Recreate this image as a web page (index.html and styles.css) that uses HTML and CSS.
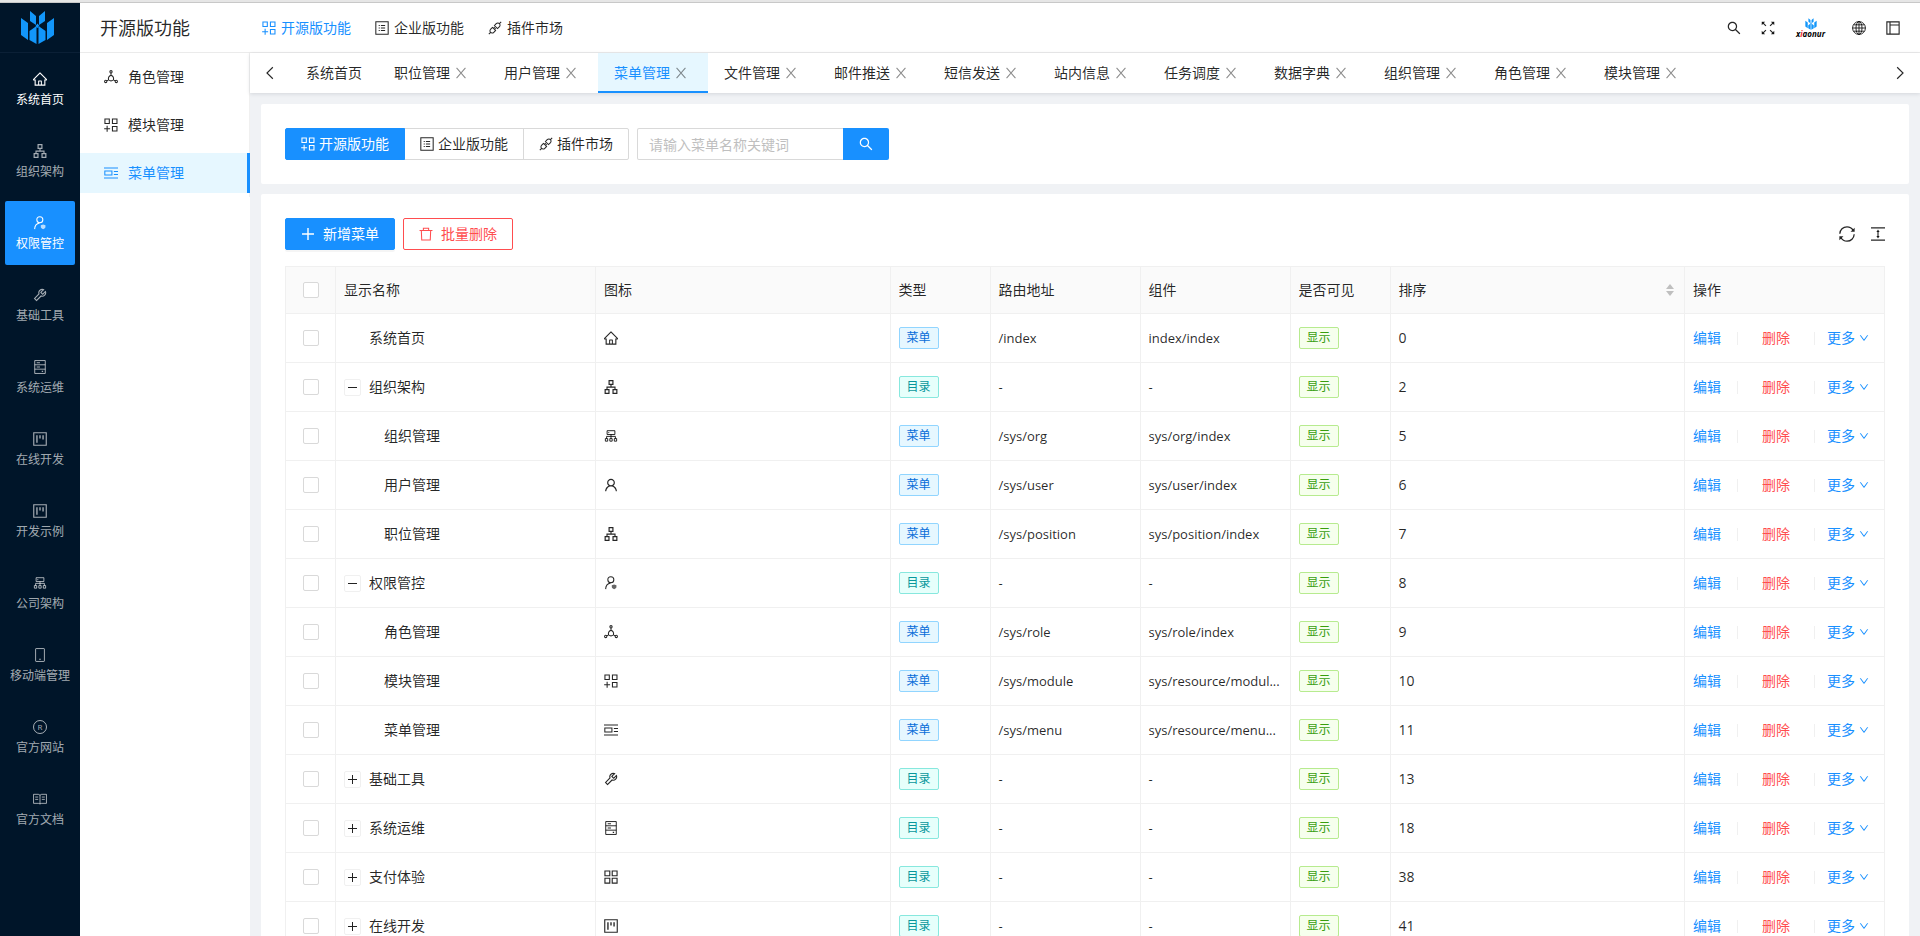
FILE: index.html
```html
<!DOCTYPE html>
<html lang="zh-CN">
<head>
    <meta charset="UTF-8">
    <meta name="viewport" content="width=device-width, initial-scale=1.0">
    <title>菜单管理</title>
    <link rel="stylesheet" href="styles.css">
</head>
<body>
    <!-- Icon sprite -->
    <svg class="sprite" aria-hidden="true">
        <symbol id="i-logo" viewBox="0 0 35 33">
            <path d="M1 7l7 5v17l-7-5zM34 7l-7 5v17l7-5zM10 0l6 5v9l-6-4zM25 0l-6 5v9l6-4zM17.500 12.500l2 2.500-2 2-2-2zM9.500 20l7-5v18l-7-4zM25.500 20l-7-5v18l7-4z"/>
        </symbol>
        <symbol id="i-home" viewBox="64 64 896 896">
            <path d="M946.5 505L534.2 92.900a31.500 31.500 0 00-44.400 0L77.500 505a63.900 63.900 0 00-18.800 46c.4 35.200 29.700 63.300 64.900 63.300h42.500V940h691.800V614.300h43.400c17.100 0 33.200-6.700 45.300-18.800a63.600 63.600 0 0018.700-45.300c0-17-6.700-33.100-18.800-45.200zM568 868H456V664h112v204zm217.900-325.700V868H632V640c0-22.100-17.900-40-40-40H432c-22.100 0-40 17.900-40 40v228H238.100V542.300h-96l370-369.700L882 542.300h-96.100z"/>
        </symbol>
        <symbol id="i-apartment" viewBox="64 64 896 896">
            <path d="M908 640H804V488c0-4.400-3.600-8-8-8H548v-96h108c8.800 0 16-7.200 16-16V80c0-8.800-7.200-16-16-16H368c-8.800 0-16 7.200-16 16v288c0 8.800 7.200 16 16 16h108v96H228c-4.400 0-8 3.600-8 8v152H116c-8.800 0-16 7.200-16 16v288c0 8.800 7.200 16 16 16h288c8.800 0 16-7.200 16-16V656c0-8.800-7.200-16-16-16H292v-88h440v88H620c-8.800 0-16 7.200-16 16v288c0 8.800 7.200 16 16 16h288c8.800 0 16-7.200 16-16V656c0-8.800-7.200-16-16-16zm-564 76v168H176V716h168zm84-408V140h168v168H428zm420 576H680V716h168v168z"/>
        </symbol>
        <symbol id="i-user" viewBox="64 64 896 896">
            <path d="M858.500 763.600a374 374 0 00-80.600-119.500 375.630 375.630 0 00-119.500-80.600c-.4-.2-.8-.3-1.200-.5C719.500 518 760 444.700 760 362c0-137-111-248-248-248S264 225 264 362c0 82.700 40.500 156 102.800 201.100-.4.2-.8.3-1.200.5-44.800 18.900-85 46-119.500 80.600a375.630 375.630 0 00-80.600 119.500A371.700 371.700 0 00136 901.800a8 8 0 008 8.200h60c4.400 0 7.900-3.500 8-7.800 2-77.200 33-149.500 87.800-204.300 56.700-56.700 132-87.900 212.200-87.900s155.500 31.200 212.200 87.900C779 752.700 810 825 812 902.200c.1 4.400 3.600 7.800 8 7.800h60a8 8 0 008-8.200c-1-47.800-10.900-94.300-29.500-138.200zM512 534c-45.900 0-89.100-17.900-121.600-50.400S340 407.900 340 362c0-45.900 17.900-89.100 50.400-121.600S466.100 190 512 190s89.100 17.900 121.600 50.400S684 316.100 684 362c0 45.900-17.900 89.100-50.400 121.600S557.900 534 512 534z"/>
        </symbol>
        <symbol id="i-user-safe" viewBox="0 0 1024 1024">
            <g fill="none" stroke="currentColor" stroke-width="76"><circle cx="500" cy="280" r="220"/><path d="M120 960c10-230 140-400 360-440"/></g>
            <path opacity=".7" d="M740 620l170 56v130c0 70-80 114-170 160-90-46-170-90-170-160V676z"/>
        </symbol>
        <symbol id="i-tool" viewBox="64 64 896 896">
            <path d="M876.600 239.500c-.5-.9-1.200-1.800-2-2.500-5-5-13.100-5-18.100 0L684.200 409.300l-67.900-67.900L788.700 169c.8-.8 1.400-1.600 2-2.500 3.600-6.100 1.600-13.900-4.500-17.500-98.200-58-226.800-44.700-311.300 39.700-67 67-89.200 162-66.500 247.400l-293 293c-3 3-2.800 7.900.3 11l169.700 169.700c3.100 3.100 8.100 3.300 11 .3l292.900-292.900c85.500 22.800 180.500.7 247.600-66.400 84.400-84.500 97.700-213.100 39.700-311.300zM786 499.800c-58.100 58.100-145.300 69.300-214.600 33.600l-282.900 282.800-79.200-79.200 282.900-282.800c-35.700-69.300-24.500-156.500 33.600-214.600a184.200 184.200 0 01144-53.500L537 318.900a32.050 32.050 0 000 45.300l124.500 124.500a32.050 32.050 0 0045.300 0l132.800-132.800c3.700 51.800-14.400 104.800-53.600 143.900z"/>
        </symbol>
        <symbol id="i-server" viewBox="0 0 1024 1024">
            <path fill="none" stroke="currentColor" stroke-width="72" d="M126 40h772v944H126zM126 350h772M126 670h772"/>
            <path d="M270 170h240v60H270zM270 480h240v60H270zM640 790h100v80H640z"/>
        </symbol>
        <symbol id="i-project" viewBox="64 64 896 896">
            <path fill="none" stroke="currentColor" stroke-width="72" d="M112 112h800v800H112z"/>
            <path d="M272 272h88v480h-88zM468 272h88v200h-88zM664 272h88v270h-88z"/>
        </symbol>
        <symbol id="i-cluster" viewBox="0 0 1024 1024">
            <path fill="none" stroke="currentColor" stroke-width="72" d="M228 124h568v280H228zM512 404v250M190 700V540h644v160M100 700h170v190H100zM427 700h170v190H427zM754 700h170v190H754z"/>
            <circle cx="350" cy="264" r="44"/>
        </symbol>
        <symbol id="i-mobile" viewBox="0 0 1024 1024">
            <rect x="190" y="40" width="644" height="944" rx="40" fill="none" stroke="currentColor" stroke-width="72"/>
            <path d="M450 790h124v70H450z"/>
        </symbol>
        <symbol id="i-read" viewBox="0 0 1024 1024">
            <path fill="none" stroke="currentColor" stroke-width="70" d="M40 170h330c80 0 142 40 142 90 0-50 62-90 142-90h330v660H654c-80 0-142 30-142 60 0-30-62-60-142-60H40zM512 260v620M160 370h220M160 540h220M644 370h220M644 540h220"/>
        </symbol>
        <symbol id="i-role" viewBox="0 0 1024 1024">
            <g fill="none" stroke="currentColor" stroke-width="76"><circle cx="512" cy="130" r="84"/><circle cx="124" cy="840" r="84"/><circle cx="900" cy="840" r="84"/><path d="M512 214v170M300 745l-96 50M724 745l96 50M512 384c-150 60-212 190-180 340 110 90 250 90 360 0 32-150-30-280-180-340z"/></g>
        </symbol>
        <symbol id="i-module" viewBox="64 64 896 896">
            <path fill="none" stroke="currentColor" stroke-width="68" d="M124 124h280v290H124zM604 124h290v290H604zM604 610h290v290H604zM264 560v380M74 750h380"/>
        </symbol>
        <symbol id="i-menu" viewBox="0 0 1024 1024">
            <path fill="none" stroke="currentColor" stroke-width="76" d="M0 150h1024M0 874h1024M60 360h520v300H60zM720 400h304M720 620h304"/>
        </symbol>
        <symbol id="i-appstore" viewBox="64 64 896 896">
            <path fill="none" stroke="currentColor" stroke-width="72" d="M124 124h310v310H124zM590 124h310v310H590zM124 590h310v310H124zM590 590h310v310H590z"/>
        </symbol>
        <symbol id="i-profile" viewBox="0 0 1024 1024">
            <path fill="none" stroke="currentColor" stroke-width="76" d="M60 60h904v904H60zM430 330h310M430 512h310M430 694h310M270 330h80M270 512h80M270 694h80"/>
        </symbol>
        <symbol id="i-api" viewBox="0 0 1024 1024">
            <path fill="none" stroke="currentColor" stroke-width="76" d="M60 964l130-130M964 60L834 190M470 330l130-130c70-70 170-80 234-10 70 64 60 164-10 234L694 554zM330 470L200 600c-70 70-80 170-10 234 64 70 164 60 234-10l130-130zM400 540l90-90M480 620l90-90"/>
        </symbol>
        <symbol id="i-search" viewBox="64 64 896 896">
            <path d="M909.600 854.500L649.900 594.800C690.200 542.700 712 479 712 412c0-80.200-31.300-155.400-87.900-212.100-56.600-56.700-132-87.900-212.100-87.900s-155.500 31.300-212.100 87.900C143.200 256.500 112 331.800 112 412c0 80.100 31.300 155.500 87.900 212.100C256.500 680.800 331.800 712 412 712c67 0 130.600-21.800 182.700-62l259.700 259.600a8.200 8.200 0 0011.600 0l43.600-43.500a8.200 8.200 0 000-11.600zM570.400 570.400C528 612.700 471.800 636 412 636s-116-23.300-158.400-65.600C211.300 528 188 471.800 188 412s23.300-116.100 65.600-158.400C296 211.300 352.200 188 412 188s116.100 23.200 158.400 65.600S636 352.200 636 412s-23.300 116.100-65.600 158.400z"/>
        </symbol>
        <symbol id="i-fullscreen" viewBox="64 64 896 896">
            <path fill="none" stroke="currentColor" stroke-width="76" d="M150 150l230 230M874 150L644 380M150 874l230-230M874 874L644 644"/>
            <path d="M110 110h220L110 330zM914 110H694l220 220zM110 914h220L110 694zM914 914H694l220-220z"/>
        </symbol>
        <symbol id="i-global" viewBox="0 0 1024 1024">
            <g fill="none" stroke="currentColor" stroke-width="70"><circle cx="512" cy="512" r="470"/><ellipse cx="512" cy="512" rx="220" ry="470"/><path d="M512 42v940M42 512h940M120 280h784M120 744h784"/></g>
        </symbol>
        <symbol id="i-layout" viewBox="64 64 896 896">
            <path fill="none" stroke="currentColor" stroke-width="72" d="M120 120h784v784H120zM320 120v784M320 320h584"/>
        </symbol>
        <symbol id="i-left" viewBox="0 0 1024 1024">
            <path fill="none" stroke="currentColor" stroke-width="84" d="M720 90L290 512l430 422"/>
        </symbol>
        <symbol id="i-right" viewBox="0 0 1024 1024">
            <path fill="none" stroke="currentColor" stroke-width="84" d="M304 90l430 422-430 422"/>
        </symbol>
        <symbol id="i-down" viewBox="64 64 896 896">
            <path d="M884 256h-75c-5.100 0-9.900 2.500-12.900 6.600L512 654.200 227.900 262.600c-3-4.100-7.800-6.600-12.900-6.600h-75c-6.500 0-10.300 7.400-6.500 12.700l352.600 486.100c12.800 17.600 39 17.600 51.700 0l352.600-486.100c3.900-5.300.1-12.700-6.400-12.700z"/>
        </symbol>
        <symbol id="i-close" viewBox="64 64 896 896">
            <path fill="none" stroke="currentColor" stroke-width="80" d="M180 130l664 764M844 130L180 894"/>
        </symbol>
        <symbol id="i-plus" viewBox="64 64 896 896">
            <path fill="none" stroke="currentColor" stroke-width="90" d="M512 130v764M130 512h764"/>
        </symbol>
        <symbol id="i-delete" viewBox="0 0 1024 1024">
            <path fill="none" stroke="currentColor" stroke-width="76" d="M40 250h944M320 250V90h384v160M170 250l30 700h624l30-700"/>
        </symbol>
        <symbol id="i-sync" viewBox="64 64 896 896">
            <path fill="none" stroke="currentColor" stroke-width="72" d="M110 500c10-220 180-390 402-390 150 0 270 70 340 190M914 524c-10 220-180 390-402 390-150 0-270-70-340-190"/>
            <path d="M940 160v230H710zM84 864V634h230z"/>
        </symbol>
        <symbol id="i-height" viewBox="0 0 1024 1024">
            <path fill="none" stroke="currentColor" stroke-width="84" d="M0 60h1024M0 964h1024M512 300v424"/>
            <path d="M512 190l120 180H392zM512 834l120-180H392z"/>
        </symbol>
    </svg>

    <div class="window-edge"></div>
    <div class="layout">
        <aside class="sider">
            <a class="sider-logo" href="#" aria-label="xiaonuo"><svg><use href="#i-logo"/></svg></a>
            <nav class="sider-nav">
                <a href="#" class="sider-item bright"><svg class="icon"><use href="#i-home"/></svg>系统首页</a>
                <a href="#" class="sider-item"><svg class="icon"><use href="#i-apartment"/></svg>组织架构</a>
                <a href="#" class="sider-item active"><svg class="icon"><use href="#i-user-safe"/></svg>权限管控</a>
                <a href="#" class="sider-item"><svg class="icon"><use href="#i-tool"/></svg>基础工具</a>
                <a href="#" class="sider-item"><svg class="icon"><use href="#i-server"/></svg>系统运维</a>
                <a href="#" class="sider-item"><svg class="icon"><use href="#i-project"/></svg>在线开发</a>
                <a href="#" class="sider-item"><svg class="icon"><use href="#i-project"/></svg>开发示例</a>
                <a href="#" class="sider-item"><svg class="icon"><use href="#i-cluster"/></svg>公司架构</a>
                <a href="#" class="sider-item"><svg class="icon"><use href="#i-mobile"/></svg>移动端管理</a>
                <a href="#" class="sider-item"><span class="icon registered">R</span>官方网站</a>
                <a href="#" class="sider-item"><svg class="icon"><use href="#i-read"/></svg>官方文档</a>
            </nav>
        </aside>

        <div class="page">
            <header class="header">
                <h1 class="header-title">开源版功能</h1>
                <nav class="header-nav">
                    <a href="#" class="active"><svg class="icon"><use href="#i-module"/></svg>开源版功能</a>
                    <a href="#"><svg class="icon"><use href="#i-profile"/></svg>企业版功能</a>
                    <a href="#"><svg class="icon"><use href="#i-api"/></svg>插件市场</a>
                </nav>
                <div class="header-tools">
                    <button type="button" aria-label="搜索"><svg class="icon"><use href="#i-search"/></svg></button>
                    <button type="button" aria-label="全屏"><svg class="icon"><use href="#i-fullscreen"/></svg></button>
                    <a class="brand" href="#"><svg><use href="#i-logo"/></svg><span>x<i>i</i>aonur</span></a>
                    <button type="button" aria-label="语言"><svg class="icon"><use href="#i-global"/></svg></button>
                    <button type="button" aria-label="布局"><svg class="icon"><use href="#i-layout"/></svg></button>
                </div>
            </header>

            <div class="body">
                <aside class="submenu">
                    <nav>
                        <a href="#"><svg class="icon"><use href="#i-role"/></svg>角色管理</a>
                        <a href="#"><svg class="icon"><use href="#i-module"/></svg>模块管理</a>
                        <a href="#" class="active"><svg class="icon"><use href="#i-menu"/></svg>菜单管理</a>
                    </nav>
                </aside>

                <div class="content">
                    <div class="tabs">
                        <button type="button" class="tabs-arrow" aria-label="向左"><svg class="icon"><use href="#i-left"/></svg></button>
                        <ul class="tabs-list">
                            <li><a href="#">系统首页</a></li>
                            <li><a href="#">职位管理</a><button type="button" aria-label="关闭"><svg><use href="#i-close"/></svg></button></li>
                            <li><a href="#">用户管理</a><button type="button" aria-label="关闭"><svg><use href="#i-close"/></svg></button></li>
                            <li class="active"><a href="#">菜单管理</a><button type="button" aria-label="关闭"><svg><use href="#i-close"/></svg></button></li>
                            <li><a href="#">文件管理</a><button type="button" aria-label="关闭"><svg><use href="#i-close"/></svg></button></li>
                            <li><a href="#">邮件推送</a><button type="button" aria-label="关闭"><svg><use href="#i-close"/></svg></button></li>
                            <li><a href="#">短信发送</a><button type="button" aria-label="关闭"><svg><use href="#i-close"/></svg></button></li>
                            <li><a href="#">站内信息</a><button type="button" aria-label="关闭"><svg><use href="#i-close"/></svg></button></li>
                            <li><a href="#">任务调度</a><button type="button" aria-label="关闭"><svg><use href="#i-close"/></svg></button></li>
                            <li><a href="#">数据字典</a><button type="button" aria-label="关闭"><svg><use href="#i-close"/></svg></button></li>
                            <li><a href="#">组织管理</a><button type="button" aria-label="关闭"><svg><use href="#i-close"/></svg></button></li>
                            <li><a href="#">角色管理</a><button type="button" aria-label="关闭"><svg><use href="#i-close"/></svg></button></li>
                            <li><a href="#">模块管理</a><button type="button" aria-label="关闭"><svg><use href="#i-close"/></svg></button></li>
                        </ul>
                        <button type="button" class="tabs-arrow" aria-label="向右"><svg class="icon"><use href="#i-right"/></svg></button>
                    </div>

                    <main class="main">
                        <section class="card">
                            <form class="filter">
                                <div class="radio-group">
                                    <label><input type="radio" name="module" checked><svg class="icon"><use href="#i-module"/></svg>开源版功能</label>
                                    <label><input type="radio" name="module"><svg class="icon"><use href="#i-profile"/></svg>企业版功能</label>
                                    <label><input type="radio" name="module"><svg class="icon"><use href="#i-api"/></svg>插件市场</label>
                                </div>
                                <div class="search">
                                    <input type="text" placeholder="请输入菜单名称关键词" aria-label="菜单名称关键词">
                                    <button type="button" aria-label="搜索"><svg class="icon"><use href="#i-search"/></svg></button>
                                </div>
                            </form>
                        </section>

                        <section class="card">
                            <div class="toolbar">
                                <button type="button" class="btn primary"><svg class="icon"><use href="#i-plus"/></svg>新增菜单</button>
                                <button type="button" class="btn danger"><svg class="icon"><use href="#i-delete"/></svg>批量删除</button>
                                <div class="toolbar-right">
                                    <button type="button" aria-label="刷新"><svg><use href="#i-sync"/></svg></button>
                                    <button type="button" aria-label="密度"><svg><use href="#i-height"/></svg></button>
                                </div>
                            </div>

                            <table class="table">
                                <colgroup>
                                    <col class="col-check"><col class="col-name"><col><col class="col-tag"><col class="col-path"><col class="col-path"><col class="col-tag"><col><col class="col-action">
                                </colgroup>
                                <thead>
                                    <tr>
                                        <th class="check"><input type="checkbox" aria-label="全选"></th>
                                        <th>显示名称</th>
                                        <th>图标</th>
                                        <th>类型</th>
                                        <th>路由地址</th>
                                        <th>组件</th>
                                        <th>是否可见</th>
                                        <th><div class="sort">排序<span class="carets"></span></div></th>
                                        <th>操作</th>
                                    </tr>
                                </thead>
                                <tbody>
                                    <tr>
                                        <td class="check"><input type="checkbox" aria-label="系统首页"></td>
                                        <td><div class="name root">系统首页</div></td>
                                        <td><svg class="icon"><use href="#i-home"/></svg></td>
                                        <td><span class="tag blue">菜单</span></td>
                                        <td class="path">/index</td>
                                        <td class="path">index/index</td>
                                        <td><span class="tag green">显示</span></td>
                                        <td>0</td>
                                        <td><div class="actions"><a href="#">编辑</a><a href="#" class="del">删除</a><a href="#">更多<svg><use href="#i-down"/></svg></a></div></td>
                                    </tr>
                                    <tr>
                                        <td class="check"><input type="checkbox" aria-label="组织架构"></td>
                                        <td><div class="name"><button type="button" class="expand open" aria-label="收起"></button>组织架构</div></td>
                                        <td><svg class="icon"><use href="#i-apartment"/></svg></td>
                                        <td><span class="tag cyan">目录</span></td>
                                        <td class="path">-</td>
                                        <td class="path">-</td>
                                        <td><span class="tag green">显示</span></td>
                                        <td>2</td>
                                        <td><div class="actions"><a href="#">编辑</a><a href="#" class="del">删除</a><a href="#">更多<svg><use href="#i-down"/></svg></a></div></td>
                                    </tr>
                                    <tr>
                                        <td class="check"><input type="checkbox" aria-label="组织管理"></td>
                                        <td><div class="name child">组织管理</div></td>
                                        <td><svg class="icon"><use href="#i-cluster"/></svg></td>
                                        <td><span class="tag blue">菜单</span></td>
                                        <td class="path">/sys/org</td>
                                        <td class="path">sys/org/index</td>
                                        <td><span class="tag green">显示</span></td>
                                        <td>5</td>
                                        <td><div class="actions"><a href="#">编辑</a><a href="#" class="del">删除</a><a href="#">更多<svg><use href="#i-down"/></svg></a></div></td>
                                    </tr>
                                    <tr>
                                        <td class="check"><input type="checkbox" aria-label="用户管理"></td>
                                        <td><div class="name child">用户管理</div></td>
                                        <td><svg class="icon"><use href="#i-user"/></svg></td>
                                        <td><span class="tag blue">菜单</span></td>
                                        <td class="path">/sys/user</td>
                                        <td class="path">sys/user/index</td>
                                        <td><span class="tag green">显示</span></td>
                                        <td>6</td>
                                        <td><div class="actions"><a href="#">编辑</a><a href="#" class="del">删除</a><a href="#">更多<svg><use href="#i-down"/></svg></a></div></td>
                                    </tr>
                                    <tr>
                                        <td class="check"><input type="checkbox" aria-label="职位管理"></td>
                                        <td><div class="name child">职位管理</div></td>
                                        <td><svg class="icon"><use href="#i-apartment"/></svg></td>
                                        <td><span class="tag blue">菜单</span></td>
                                        <td class="path">/sys/position</td>
                                        <td class="path">sys/position/index</td>
                                        <td><span class="tag green">显示</span></td>
                                        <td>7</td>
                                        <td><div class="actions"><a href="#">编辑</a><a href="#" class="del">删除</a><a href="#">更多<svg><use href="#i-down"/></svg></a></div></td>
                                    </tr>
                                    <tr>
                                        <td class="check"><input type="checkbox" aria-label="权限管控"></td>
                                        <td><div class="name"><button type="button" class="expand open" aria-label="收起"></button>权限管控</div></td>
                                        <td><svg class="icon"><use href="#i-user-safe"/></svg></td>
                                        <td><span class="tag cyan">目录</span></td>
                                        <td class="path">-</td>
                                        <td class="path">-</td>
                                        <td><span class="tag green">显示</span></td>
                                        <td>8</td>
                                        <td><div class="actions"><a href="#">编辑</a><a href="#" class="del">删除</a><a href="#">更多<svg><use href="#i-down"/></svg></a></div></td>
                                    </tr>
                                    <tr>
                                        <td class="check"><input type="checkbox" aria-label="角色管理"></td>
                                        <td><div class="name child">角色管理</div></td>
                                        <td><svg class="icon"><use href="#i-role"/></svg></td>
                                        <td><span class="tag blue">菜单</span></td>
                                        <td class="path">/sys/role</td>
                                        <td class="path">sys/role/index</td>
                                        <td><span class="tag green">显示</span></td>
                                        <td>9</td>
                                        <td><div class="actions"><a href="#">编辑</a><a href="#" class="del">删除</a><a href="#">更多<svg><use href="#i-down"/></svg></a></div></td>
                                    </tr>
                                    <tr>
                                        <td class="check"><input type="checkbox" aria-label="模块管理"></td>
                                        <td><div class="name child">模块管理</div></td>
                                        <td><svg class="icon"><use href="#i-module"/></svg></td>
                                        <td><span class="tag blue">菜单</span></td>
                                        <td class="path">/sys/module</td>
                                        <td class="path" title="sys/resource/module/index">sys/resource/modul...</td>
                                        <td><span class="tag green">显示</span></td>
                                        <td>10</td>
                                        <td><div class="actions"><a href="#">编辑</a><a href="#" class="del">删除</a><a href="#">更多<svg><use href="#i-down"/></svg></a></div></td>
                                    </tr>
                                    <tr>
                                        <td class="check"><input type="checkbox" aria-label="菜单管理"></td>
                                        <td><div class="name child">菜单管理</div></td>
                                        <td><svg class="icon"><use href="#i-menu"/></svg></td>
                                        <td><span class="tag blue">菜单</span></td>
                                        <td class="path">/sys/menu</td>
                                        <td class="path" title="sys/resource/menu/index">sys/resource/menu...</td>
                                        <td><span class="tag green">显示</span></td>
                                        <td>11</td>
                                        <td><div class="actions"><a href="#">编辑</a><a href="#" class="del">删除</a><a href="#">更多<svg><use href="#i-down"/></svg></a></div></td>
                                    </tr>
                                    <tr>
                                        <td class="check"><input type="checkbox" aria-label="基础工具"></td>
                                        <td><div class="name"><button type="button" class="expand" aria-label="展开"></button>基础工具</div></td>
                                        <td><svg class="icon"><use href="#i-tool"/></svg></td>
                                        <td><span class="tag cyan">目录</span></td>
                                        <td class="path">-</td>
                                        <td class="path">-</td>
                                        <td><span class="tag green">显示</span></td>
                                        <td>13</td>
                                        <td><div class="actions"><a href="#">编辑</a><a href="#" class="del">删除</a><a href="#">更多<svg><use href="#i-down"/></svg></a></div></td>
                                    </tr>
                                    <tr>
                                        <td class="check"><input type="checkbox" aria-label="系统运维"></td>
                                        <td><div class="name"><button type="button" class="expand" aria-label="展开"></button>系统运维</div></td>
                                        <td><svg class="icon"><use href="#i-server"/></svg></td>
                                        <td><span class="tag cyan">目录</span></td>
                                        <td class="path">-</td>
                                        <td class="path">-</td>
                                        <td><span class="tag green">显示</span></td>
                                        <td>18</td>
                                        <td><div class="actions"><a href="#">编辑</a><a href="#" class="del">删除</a><a href="#">更多<svg><use href="#i-down"/></svg></a></div></td>
                                    </tr>
                                    <tr>
                                        <td class="check"><input type="checkbox" aria-label="支付体验"></td>
                                        <td><div class="name"><button type="button" class="expand" aria-label="展开"></button>支付体验</div></td>
                                        <td><svg class="icon"><use href="#i-appstore"/></svg></td>
                                        <td><span class="tag cyan">目录</span></td>
                                        <td class="path">-</td>
                                        <td class="path">-</td>
                                        <td><span class="tag green">显示</span></td>
                                        <td>38</td>
                                        <td><div class="actions"><a href="#">编辑</a><a href="#" class="del">删除</a><a href="#">更多<svg><use href="#i-down"/></svg></a></div></td>
                                    </tr>
                                    <tr>
                                        <td class="check"><input type="checkbox" aria-label="在线开发"></td>
                                        <td><div class="name"><button type="button" class="expand" aria-label="展开"></button>在线开发</div></td>
                                        <td><svg class="icon"><use href="#i-project"/></svg></td>
                                        <td><span class="tag cyan">目录</span></td>
                                        <td class="path">-</td>
                                        <td class="path">-</td>
                                        <td><span class="tag green">显示</span></td>
                                        <td>41</td>
                                        <td><div class="actions"><a href="#">编辑</a><a href="#" class="del">删除</a><a href="#">更多<svg><use href="#i-down"/></svg></a></div></td>
                                    </tr>
                                </tbody>
                            </table>
                        </section>
                    </main>
                </div>
            </div>
        </div>
    </div>
</body>
</html>
```

FILE: styles.css
```css
* {
    margin: 0;
    padding: 0;
    box-sizing: border-box;
}

body {
    display: flex;
    flex-direction: column;
    height: 100vh;
    overflow: hidden;
    font-family: "Open Sans", "Noto Sans CJK SC", sans-serif;
    font-size: 14px;
    line-height: 22px;
    color: rgba(0, 0, 0, 0.85);
    background: #f0f2f5;
}

a {
    color: inherit;
    text-decoration: none;
}

button,
input {
    font: inherit;
    color: inherit;
}

button {
    border: none;
    background: none;
    cursor: pointer;
}

svg {
    display: block;
    fill: currentColor;
}

.sprite {
    position: absolute;
    width: 0;
    height: 0;
}

.icon {
    width: 14px;
    height: 14px;
    flex: none;
}

.window-edge {
    flex: none;
    height: 3px;
    background: #e6e6e6;
    border-bottom: 1px solid #c8c8c8;
}

.layout {
    flex: 1;
    display: flex;
    min-height: 0;
}

/* Dark sidebar */
.sider {
    flex: none;
    width: 80px;
    background: #001529;
    color: rgba(255, 255, 255, 0.65);
}

.sider-logo {
    display: flex;
    align-items: center;
    justify-content: center;
    height: 50px;
    padding-right: 5px;
    border-bottom: 1px solid #0b2036;
    color: #1296fa;
}

.sider-logo svg {
    width: 35px;
    height: 33px;
}

.sider-nav {
    display: flex;
    flex-direction: column;
    gap: 8px;
    padding: 4px 5px;
}

.sider-item {
    display: flex;
    flex-direction: column;
    align-items: center;
    justify-content: center;
    gap: 5px;
    height: 64px;
    padding-top: 3px;
    border-radius: 2px;
    font-size: 12px;
    line-height: 18px;
    white-space: nowrap;
}

.sider-item.bright {
    color: #fff;
}

.sider-item.active {
    color: #fff;
    background: #1890ff;
}

.registered {
    border: 1px solid;
    border-radius: 50%;
    font-size: 8px;
    line-height: 12px;
    text-align: center;
}

/* Header */
.page {
    flex: 1;
    display: flex;
    flex-direction: column;
    min-width: 0;
}

.header {
    flex: none;
    display: flex;
    align-items: center;
    height: 50px;
    background: #fff;
    border-bottom: 1px solid #ebebeb;
}

.header-title {
    width: 182px;
    padding-left: 20px;
    font-size: 18px;
    font-weight: 400;
}

.header-nav {
    display: flex;
    gap: 24px;
}

.header-nav a {
    display: flex;
    align-items: center;
    gap: 5px;
}

.header-nav .active {
    color: #1890ff;
}

.header-tools {
    display: flex;
    align-items: center;
    gap: 20px;
    margin-left: auto;
    padding-right: 20px;
}

.brand {
    display: flex;
    flex-direction: column;
    align-items: center;
    width: 37px;
    padding-right: 6px;
    font-size: 8px;
    font-weight: 700;
    font-style: italic;
    line-height: 8px;
    color: #000;
}

.brand svg {
    width: 12px;
    height: 12px;
    color: #1296fa;
}

.brand i {
    color: #f5222d;
}

/* Second level menu */
.body {
    flex: 1;
    display: flex;
    min-height: 0;
}

.submenu {
    flex: none;
    width: 170px;
    background: #fff;
}

.submenu nav {
    display: flex;
    flex-direction: column;
    gap: 8px;
    padding: 4px 0;
    border-right: 1px solid #f0f0f0;
}

.submenu a {
    display: flex;
    align-items: center;
    gap: 10px;
    height: 40px;
    padding-left: 24px;
}

.submenu .active {
    margin-right: -1px;
    color: #1890ff;
    background: #e6f7ff;
    border-right: 3px solid #1890ff;
}

/* Tabs */
.content {
    flex: 1;
    display: flex;
    flex-direction: column;
    min-width: 0;
}

.tabs {
    flex: none;
    display: flex;
    height: 40px;
    background: #fff;
    box-shadow: 0 1px 4px rgba(0, 21, 41, 0.12);
}

.tabs-arrow {
    flex: none;
    display: flex;
    align-items: center;
    justify-content: center;
    width: 40px;
}

.tabs-list {
    flex: 1;
    display: flex;
    min-width: 0;
    overflow: hidden;
    list-style: none;
}

.tabs-list li {
    flex: none;
    display: flex;
    align-items: center;
    gap: 5px;
    padding: 2px 16px 0;
    border-bottom: 2px solid transparent;
}

.tabs-list li:not(:first-child) {
    width: 110px;
}

.tabs-list .active {
    background: #e6f7ff;
    border-color: #1890ff;
}

.tabs-list .active a {
    color: #1890ff;
}

.tabs-list button {
    color: rgba(0, 0, 0, 0.45);
}

.tabs-list svg {
    width: 12px;
    height: 12px;
}

/* Cards */
.main {
    flex: 1;
    display: flex;
    flex-direction: column;
    gap: 10px;
    min-height: 0;
    padding: 11px;
    overflow-y: auto;
    scrollbar-width: none;
}

.card {
    flex: none;
    padding: 24px;
    background: #fff;
    border-radius: 2px;
}

.filter {
    display: flex;
    gap: 8px;
}

.radio-group {
    display: flex;
}

.radio-group label {
    display: flex;
    align-items: center;
    gap: 4px;
    height: 32px;
    padding: 0 15px;
    border: 1px solid #d9d9d9;
    cursor: pointer;
}

.radio-group label + label {
    margin-left: -1px;
}

.radio-group label:first-child {
    border-radius: 2px 0 0 2px;
}

.radio-group label:last-child {
    border-radius: 0 2px 2px 0;
}

.radio-group label:has(input:checked) {
    z-index: 1;
    color: #fff;
    background: #1890ff;
    border-color: #1890ff;
}

.radio-group input {
    position: absolute;
    opacity: 0;
}

.search {
    display: flex;
}

.search input {
    width: 206px;
    height: 32px;
    padding: 0 11px;
    border: 1px solid #d9d9d9;
    border-right: none;
    border-radius: 2px 0 0 2px;
    outline: none;
}

.search input::placeholder {
    color: #bfbfbf;
}

.search button {
    display: flex;
    align-items: center;
    justify-content: center;
    width: 46px;
    height: 32px;
    color: #fff;
    background: #1890ff;
    border-radius: 0 2px 2px 0;
}

/* Toolbar */
.toolbar {
    display: flex;
    align-items: center;
    gap: 8px;
    margin-bottom: 16px;
}

.btn {
    display: flex;
    align-items: center;
    gap: 8px;
    height: 32px;
    padding: 0 15px;
    border: 1px solid;
    border-radius: 2px;
}

.btn.primary {
    color: #fff;
    background: #1890ff;
    border-color: #1890ff;
    box-shadow: 0 2px 0 rgba(0, 0, 0, 0.04);
}

.btn.danger {
    color: #ff4d4f;
    background: #fff;
    border-color: #ff4d4f;
}

.toolbar-right {
    display: flex;
    gap: 16px;
    margin-left: auto;
}

.toolbar-right svg {
    width: 16px;
    height: 16px;
}

.toolbar-right button:last-child svg {
    width: 14px;
}

/* Table */
.table {
    width: 100%;
    table-layout: fixed;
    border-collapse: separate;
    border-spacing: 0;
    border-top: 1px solid #f0f0f0;
    border-left: 1px solid #f0f0f0;
}

.col-check {
    width: 50px;
}

.col-name {
    width: 260px;
}

.col-tag {
    width: 100px;
}

.col-path {
    width: 150px;
}

.col-action {
    width: 200px;
}

.table th,
.table td {
    height: 49px;
    padding: 0 8px;
    border-right: 1px solid #f0f0f0;
    border-bottom: 1px solid #f0f0f0;
    text-align: left;
    vertical-align: middle;
    white-space: nowrap;
}

.table th {
    height: 47px;
    font-weight: 400;
    background: #fafafa;
}

.table .path {
    font-size: 13px;
    overflow: hidden;
    text-overflow: ellipsis;
}

.table .check {
    text-align: center;
}

.check input {
    display: block;
    width: 16px;
    height: 16px;
    margin: 0 auto;
    appearance: none;
    background: #fff;
    border: 1px solid #d9d9d9;
    border-radius: 2px;
}

.check input:checked {
    background: #1890ff;
    border-color: #1890ff;
}

.name {
    display: flex;
    align-items: center;
    gap: 8px;
}

.name.root {
    padding-left: 25px;
}

.name.child {
    padding-left: 40px;
}

.expand {
    width: 17px;
    height: 17px;
    border: 1px solid #f0f0f0;
    border-radius: 2px;
    background:
        linear-gradient(#222, #222) center / 9px 1px no-repeat,
        linear-gradient(#222, #222) center / 1px 9px no-repeat;
}

.expand.open {
    background: linear-gradient(#222, #222) center / 9px 1px no-repeat;
}

.tag {
    display: block;
    width: 40px;
    padding: 0 7px;
    border: 1px solid;
    border-radius: 2px;
    font-size: 12px;
    line-height: 20px;
}

.tag.blue {
    color: #096dd9;
    background: #e6f7ff;
    border-color: #91d5ff;
}

.tag.cyan {
    color: #08979c;
    background: #e6fffb;
    border-color: #87e8de;
}

.tag.green {
    color: #389e0d;
    background: #f6ffed;
    border-color: #b7eb8f;
}

.sort {
    display: flex;
    align-items: center;
    justify-content: space-between;
    padding-right: 2px;
}

.carets {
    display: flex;
    flex-direction: column;
    gap: 2px;
}

.carets::before,
.carets::after {
    content: "";
    border: 4px solid transparent;
}

.carets::before {
    border-top: none;
    border-bottom: 5px solid #bfbfbf;
}

.carets::after {
    border-bottom: none;
    border-top: 5px solid #bfbfbf;
}

.actions {
    display: flex;
    align-items: center;
    color: #1890ff;
}

.actions a {
    display: flex;
    align-items: center;
    gap: 4px;
}

.actions .del {
    margin: 0 12px 0 16px;
    color: #ff4d4f;
}

.actions .del::before,
.actions .del::after {
    content: "";
    width: 1px;
    height: 13px;
    background: rgba(0, 0, 0, 0.06);
}

.actions .del::before {
    margin-right: 20px;
}

.actions .del::after {
    margin-left: 20px;
}

.actions svg {
    width: 10px;
    height: 10px;
}
```
